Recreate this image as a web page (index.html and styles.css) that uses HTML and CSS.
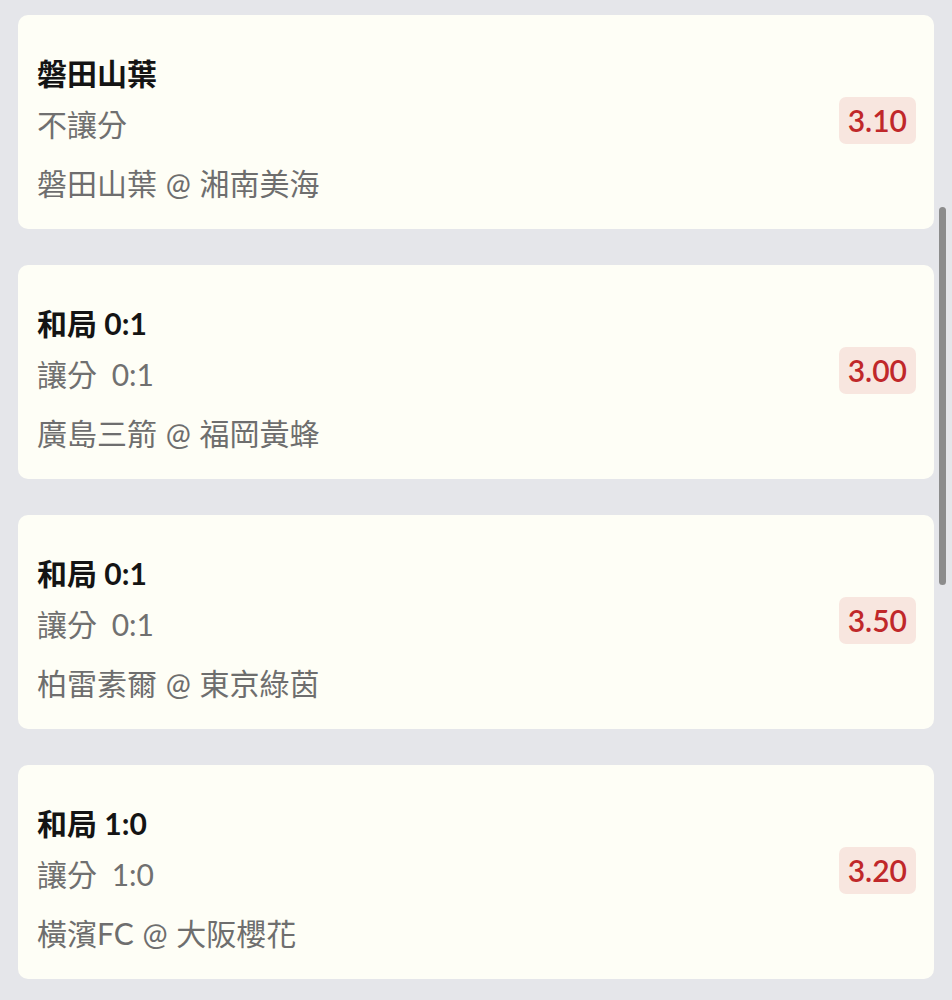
FILE: index.html
```html
<!DOCTYPE html>
<html lang="zh-Hant">
<head>
    <meta charset="UTF-8">
    <meta name="viewport" content="width=device-width, initial-scale=1.0">
    <title>投注單</title>
    <link rel="stylesheet" href="styles.css">
</head>
<body>
    <div class="list">
        <div class="bet">
            <div class="info">
                <div class="pick">磐田山葉</div>
                <div class="market">不讓分</div>
                <div class="match">磐田山葉 @ 湘南美海</div>
            </div>
            <div class="odds">3.10</div>
        </div>
        <div class="bet">
            <div class="info">
                <div class="pick">和局 0:1</div>
                <div class="market">讓分 0:1</div>
                <div class="match">廣島三箭 @ 福岡黃蜂</div>
            </div>
            <div class="odds">3.00</div>
        </div>
        <div class="bet">
            <div class="info">
                <div class="pick">和局 0:1</div>
                <div class="market">讓分 0:1</div>
                <div class="match">柏雷素爾 @ 東京綠茵</div>
            </div>
            <div class="odds">3.50</div>
        </div>
        <div class="bet">
            <div class="info">
                <div class="pick">和局 1:0</div>
                <div class="market">讓分 1:0</div>
                <div class="match">橫濱FC @ 大阪櫻花</div>
            </div>
            <div class="odds">3.20</div>
        </div>
    </div>
    <div class="scrollbar"></div>
</body>
</html>
```

FILE: styles.css
```css
body {
    font-family: Lato, "Noto Sans CJK TC", sans-serif;
    margin: 0;
    padding: 15px 18px;
    background-color: #e5e6ea;
    overflow: hidden;
}
.list {
    display: flex;
    flex-direction: column;
    gap: 36px;
}
.bet {
    display: flex;
    align-items: center;
    justify-content: space-between;
    background-color: #fefef6;
    border-radius: 10px;
    padding: 38px 18px 26px 19px;
}
.pick,
.market,
.match {
    font-size: 30px;
    line-height: 40px;
}
.pick {
    font-weight: 700;
    color: #141414;
}
.market {
    margin-top: 11px;
    color: #707070;
    word-spacing: 7px;
}
.match {
    margin-top: 19px;
    color: #6e6e6e;
    word-spacing: 1px;
}
.odds {
    margin-bottom: 16px;
    padding: 3px 9px;
    line-height: 41px;
    font-size: 30px;
    font-weight: 600;
    color: #c0282a;
    background-color: #f8e6df;
    border-radius: 7px;
}
.scrollbar {
    position: fixed;
    top: 207px;
    right: 6px;
    width: 7px;
    height: 378px;
    border-radius: 4px;
    background-color: #8c8c8c;
}
```
